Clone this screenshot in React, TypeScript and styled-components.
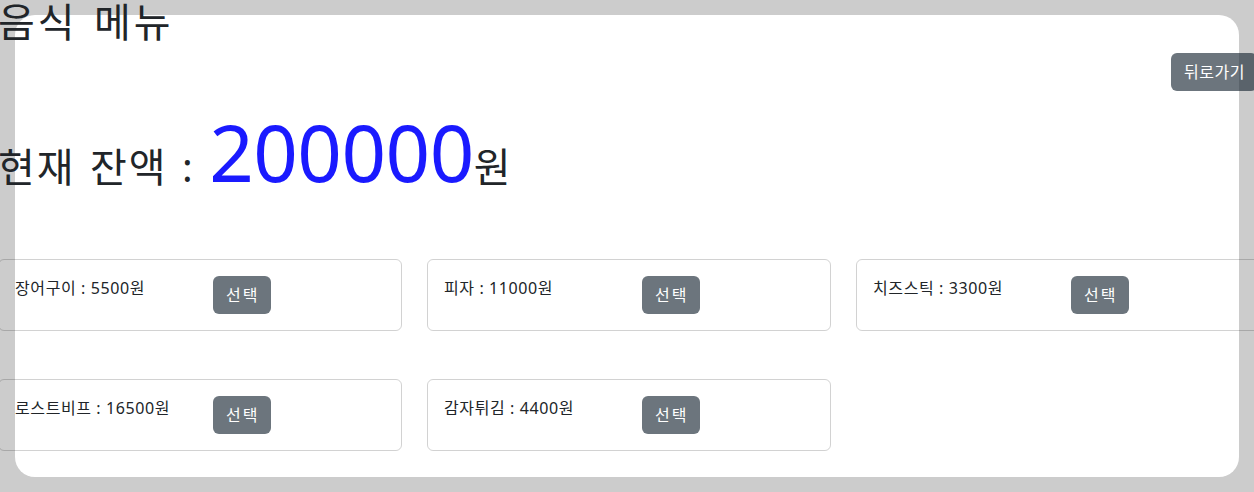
import React from 'react';
import styled, { createGlobalStyle } from 'styled-components';

const GlobalStyle = createGlobalStyle`
  html, body { margin:0; padding:0; }
  body {
    background:#cccccc; overflow:hidden;
    font-family:"Noto Sans","Noto Sans CJK KR",sans-serif;
    color:#212529; font-size:16px; line-height:1.5;
  }
  * { box-sizing:border-box; }
`;

// 흰색 패널 (내용은 패널 밖으로 살짝 넘침)
const Panel = styled.div`
  display:flow-root;margin:15px;height:462px;background:#fff;border-radius:20px;
`;

const Content = styled.div`
  margin:-17px 0 0 -17px;width:1259px;
`;

const Title = styled.h1`
  margin:0;font-size:40px;line-height:48px;font-weight:400;
  letter-spacing:3px;word-spacing:3px;
`;

const TopBar = styled.div`
  display:flex;justify-content:flex-end;margin-top:7px;
`;

const Btn = styled.button<{ $spacing?: number }>`
  font-family:inherit;font-size:16px;line-height:24px;
  letter-spacing:${p => p.$spacing ?? 1}px;
  padding:7px 12px 7px 13px;border:0;border-radius:6px;cursor:pointer;
  color:#fff;background:rgba(29,43,55,0.65);white-space:nowrap;
`;

const Balance = styled.div`
  margin-top:15px;font-size:40px;line-height:1.2;
  letter-spacing:2px;word-spacing:2px;
`;

const Amount = styled.span`
  font-size:78px;color:#1a1aff;letter-spacing:-0.5px;
`;

const Grid = styled.div`
  display:grid;grid-template-columns:repeat(3,404px);column-gap:25px;row-gap:48px;
  margin-top:59px;
`;

const Card = styled.div`
  display:flex;align-items:flex-start;padding:16px;
  border:1px solid rgba(0,0,0,0.175);border-radius:6px;height:72px;
`;

const Name = styled.span`
  width:198px;flex:none;line-height:24px;letter-spacing:0.6px;
`;

const menu = [
  { name:'장어구이', price:5500 },
  { name:'피자', price:11000 },
  { name:'치즈스틱', price:3300 },
  { name:'로스트비프', price:16500 },
  { name:'감자튀김', price:4400 },
];

export default function App() {
  return (
    <>
      <GlobalStyle />
      <Panel>
        <Content>
          <Title>음식 메뉴</Title>
          <TopBar><Btn $spacing={0.5}>뒤로가기</Btn></TopBar>
          <Balance>현재 잔액 : <Amount>200000</Amount>원</Balance>
          <Grid>
            {menu.map(m => (
              <Card key={m.name}>
                <Name>{m.name} : {m.price}원</Name>
                <Btn $spacing={2}>선택</Btn>
              </Card>
            ))}
          </Grid>
        </Content>
      </Panel>
    </>
  );
}
